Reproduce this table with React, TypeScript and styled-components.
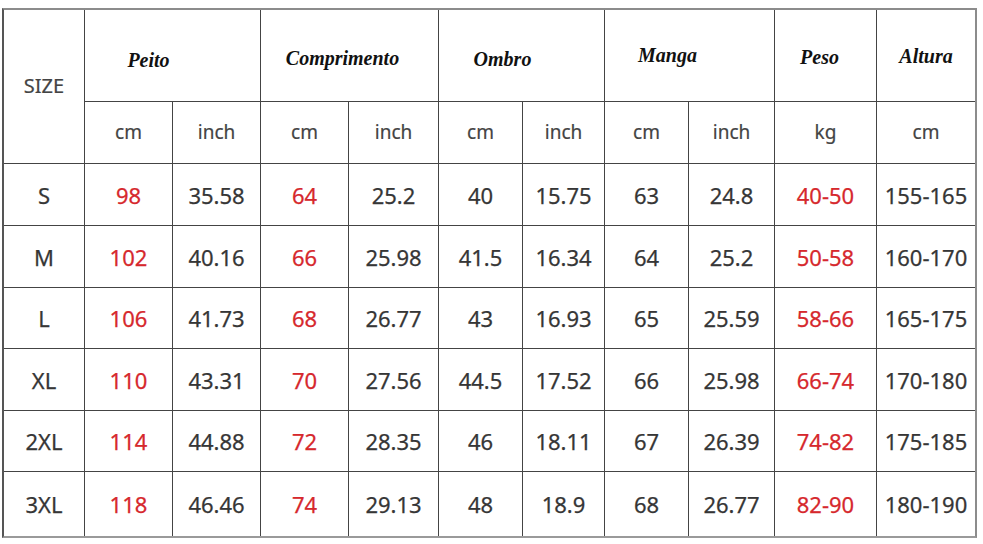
import styled, { createGlobalStyle } from "styled-components";

const GlobalStyle = createGlobalStyle`
    html, body {
        margin: 0;
        padding: 0;
        background: #ffffff;
    }
`

const Page = styled.div`
    padding: 8px 0 0 2px;
`

const Chart = styled.div`
    display: grid;
    grid-template-columns: 81px 88px 88px 88px 90px 84px 82px 84px 86px 102px 98px;
    grid-template-rows: 92px 62px 62px 62px 61px 62px 61px 64px;
    width: max-content;
    border-top: 2px solid #8c8c8c;
    border-left: 2px solid #555555;
    border-right: 2px solid #8c8c8c;
    border-bottom: 2px solid #9a9a9a;
    font-family: "Noto Sans", "Open Sans", sans-serif;
`

const Cell = styled.div<{$col: number; $row: number; $span?: number; $rows?: number}>`
    grid-column: ${({$col, $span})=>`${$col} / span ${$span ?? 1}`};
    grid-row: ${({$row, $rows})=>`${$row} / span ${$rows ?? 1}`};
    display: flex;
    align-items: center;
    justify-content: center;
    box-sizing: border-box;
    border-right: ${({$col, $span})=>$col + ($span ?? 1) > 11 ? "none" : "1px solid #444444"};
    border-bottom: ${({$row, $rows})=>$row + ($rows ?? 1) > 8 ? "none" : "1px solid #444444"};
`

const GroupTitle = styled.span<{$dx: number; $dy: number}>`
    font-family: "Liberation Serif", "Times New Roman", serif;
    font-style: italic;
    font-weight: bold;
    font-size: 20px;
    color: #111111;
    transform: translate(${({$dx})=>$dx}px, ${({$dy})=>$dy}px);
`

const SizeLabel = styled.span`
    font-size: 20px;
    color: #444444;
    margin-top: -3px;
    -webkit-text-stroke: 0.2px #444444;
`

const Unit = styled.span`
    font-size: 19px;
    color: #444444;
    margin-top: -2px;
    -webkit-text-stroke: 0.2px #444444;
`

const Value = styled.span<{$red?: boolean}>`
    font-size: 22px;
    color: ${({$red})=>$red ? "#d6282d" : "#363636"};
    -webkit-text-stroke: 0.25px ${({$red})=>$red ? "#d6282d" : "#363636"};
`

const groups = [
    {title: "Peito", col: 2, span: 2, dx: -24, dy: 5},
    {title: "Comprimento", col: 4, span: 2, dx: -7, dy: 3},
    {title: "Ombro", col: 6, span: 2, dx: -19, dy: 4},
    {title: "Manga", col: 8, span: 2, dx: -22, dy: 0},
    {title: "Peso", col: 10, span: 1, dx: -6, dy: 2},
    {title: "Altura", col: 11, span: 1, dx: 0, dy: 1},
]

const units = ["cm", "inch", "cm", "inch", "cm", "inch", "cm", "inch", "kg", "cm"]

// red columns: Peito cm, Comprimento cm, Peso
const redCols = [2, 4, 10]

const rows = [
    ["S", "98", "35.58", "64", "25.2", "40", "15.75", "63", "24.8", "40-50", "155-165"],
    ["M", "102", "40.16", "66", "25.98", "41.5", "16.34", "64", "25.2", "50-58", "160-170"],
    ["L", "106", "41.73", "68", "26.77", "43", "16.93", "65", "25.59", "58-66", "165-175"],
    ["XL", "110", "43.31", "70", "27.56", "44.5", "17.52", "66", "25.98", "66-74", "170-180"],
    ["2XL", "114", "44.88", "72", "28.35", "46", "18.11", "67", "26.39", "74-82", "175-185"],
    ["3XL", "118", "46.46", "74", "29.13", "48", "18.9", "68", "26.77", "82-90", "180-190"],
]

export default function App() {
    return (
        <Page>
            <GlobalStyle/>
            <Chart>
                <Cell $col={1} $row={1} $rows={2}>
                    <SizeLabel>SIZE</SizeLabel>
                </Cell>
                {groups.map(g => (
                    <Cell key={g.title} $col={g.col} $row={1} $span={g.span}>
                        <GroupTitle $dx={g.dx} $dy={g.dy}>{g.title}</GroupTitle>
                    </Cell>
                ))}
                {units.map((u, i) => (
                    <Cell key={"u" + i} $col={i + 2} $row={2}>
                        <Unit>{u}</Unit>
                    </Cell>
                ))}
                {rows.map((r, ri) => r.map((v, ci) => (
                    <Cell key={ri + "-" + ci} $col={ci + 1} $row={ri + 3}>
                        <Value $red={redCols.includes(ci + 1)}>{v}</Value>
                    </Cell>
                )))}
            </Chart>
        </Page>
    )
}
